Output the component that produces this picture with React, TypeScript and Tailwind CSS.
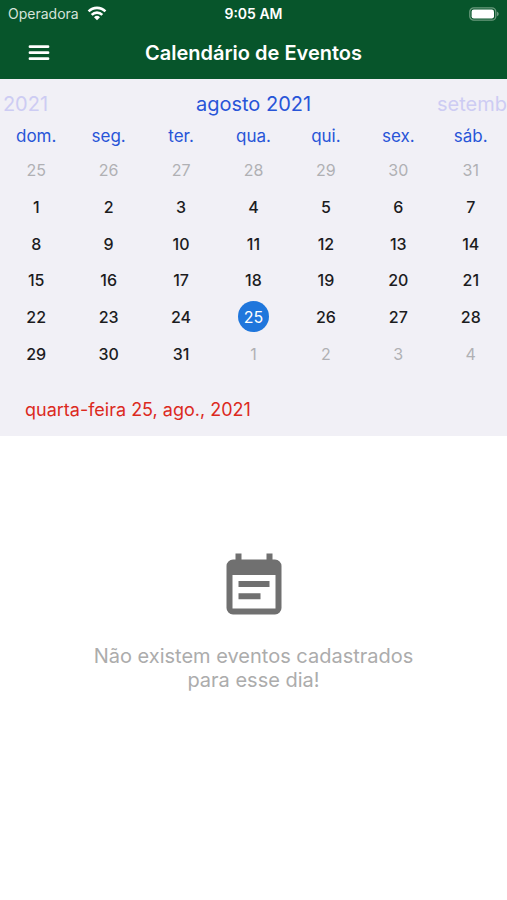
import React, { useState } from 'react';

// Datos del calendario
const WEEK_DAYS = ['dom.', 'seg.', 'ter.', 'qua.', 'qui.', 'sex.', 'sáb.'];
const MONTHS = ['julho 2021', 'agosto 2021', 'setembro 2021'];
const FIRST_DAY = new Date(2021, 6, 25);
const CURRENT_MONTH = 7;

const buildWeeks = (): Date[][] =>
  Array.from({ length: 6 }, (_, week) =>
    Array.from(
      { length: 7 },
      (_, day) =>
        new Date(FIRST_DAY.getFullYear(), FIRST_DAY.getMonth(), FIRST_DAY.getDate() + week * 7 + day)
    )
  );

const LONG_DAYS = ['domingo', 'segunda-feira', 'terça-feira', 'quarta-feira', 'quinta-feira', 'sexta-feira', 'sábado'];
const SHORT_MONTHS = ['jan.', 'fev.', 'mar.', 'abr.', 'mai.', 'jun.', 'jul.', 'ago.', 'set.', 'out.', 'nov.', 'dez.'];

const formatDate = (d: Date) =>
  `${LONG_DAYS[d.getDay()]} ${d.getDate()}, ${SHORT_MONTHS[d.getMonth()]}, ${d.getFullYear()}`;

const WifiIcon: React.FC = () => (
  <svg viewBox="0 0 20 15" className="w-5 h-[15px]" fill="none" stroke="white" strokeWidth="2.6" aria-hidden="true">
    <path d="M1.6 5.4a11.8 11.8 0 0 1 16.8 0" />
    <path d="M4.7 8.800a7.5 7.5 0 0 1 10.6 0" />
    <path d="M10 14.2 7 11.2a4.3 4.3 0 0 1 6 0z" fill="white" stroke="none" />
  </svg>
);

const BatteryIcon: React.FC = () => (
  <svg viewBox="0 0 30 14" className="w-[30px] h-3.5" aria-hidden="true">
    <rect x="0.8" y="0.8" width="26" height="12.4" rx="4" fill="none" stroke="#6b9a7e" strokeWidth="1.3" />
    <rect x="2.6" y="2.6" width="22.4" height="8.8" rx="2.2" fill="white" />
    <path d="M28 4.8c1.2.4 1.7 1.2 1.7 2.2s-.5 1.8-1.7 2.2z" fill="#6b9a7e" />
  </svg>
);

const EventNoteIcon: React.FC = () => (
  <svg viewBox="0 0 56 62" className="w-14 h-[62px]" fill="#707070" aria-hidden="true">
    <path
      fillRule="evenodd"
      d="M9.5.5h6v6h25v-6h6v6H49a6.5 6.5 0 0 1 6.5 6.5v42a6.5 6.5 0 0 1-6.5 6.5H7A6.5 6.5 0 0 1 .5 55V13A6.5 6.5 0 0 1 7 6.5h2.5zM6.5 22v33.5h43V22z"
    />
    <path d="M12.5 28h31v6h-31zM12.5 40.300h22v6h-22z" />
  </svg>
);

const App: React.FC = () => {
  const [selected, setSelected] = useState<Date>(new Date(2021, 7, 25));

  return (
    <div className="min-h-screen bg-white font-[Inter,sans-serif]">
      <header className="bg-[#07552b] text-white">
        {/* Barra de estado */}
        <div className="grid grid-cols-3 items-center h-[27px] px-2 text-[14px]">
          <div className="flex items-center gap-2 text-[#d5e3da]">
            <span>Operadora</span>
            <WifiIcon />
          </div>
          <span className="text-center font-semibold">9:05 AM</span>
          <div className="flex justify-end">
            <BatteryIcon />
          </div>
        </div>

        <div className="grid grid-cols-[50px_1fr_50px] items-center h-[52px] px-[14px]">
          <button type="button" aria-label="Menu" className="flex items-center justify-center h-12">
            <svg viewBox="0 0 22 16" className="w-[22px] h-4" stroke="white" strokeWidth="2.8" strokeLinecap="round" aria-hidden="true">
              <path d="M2 1.700h18M2 7.700h18M2 13.700h18" />
            </svg>
          </button>
          <h1 className="text-center text-[20px] font-semibold">Calendário de Eventos</h1>
        </div>
      </header>

      <section className="bg-[#f1f0f6]">
        {/* Cabecera con los meses */}
        <div className="flex justify-center overflow-hidden h-[43px] pt-[9px]">
          {MONTHS.map((month) => (
            <div
              key={month}
              className={`w-1/2 shrink-0 text-center whitespace-nowrap text-[20px] leading-8 ${
                month === 'agosto 2021' ? 'text-[#2855d8]' : 'text-[#cdccf3]'
              }`}
            >
              {month}
            </div>
          ))}
        </div>

        <table className="w-full h-[250px] table-fixed text-center text-[16px]">
          <thead>
            <tr className="h-[30px]">
              {WEEK_DAYS.map((day) => (
                <th key={day} scope="col" className="p-0 text-[17px] font-normal text-[#2855d8]">
                  {day}
                </th>
              ))}
            </tr>
          </thead>
          <tbody>
            {buildWeeks().map((week) => (
              <tr key={week[0].getTime()}>
                {week.map((date) => {
                  const isSelected = date.getTime() === selected.getTime();
                  const isOutside = date.getMonth() !== CURRENT_MONTH;
                  return (
                    <td key={date.getTime()} className="p-0">
                      <button
                        type="button"
                        onClick={() => setSelected(date)}
                        className={`block mx-auto size-[31px] rounded-full ${
                          isSelected
                            ? 'bg-[#1f76dc] text-white'
                            : isOutside
                              ? 'text-[#b0b0b4]'
                              : 'text-[#1c1c1e] font-medium'
                        }`}
                      >
                        {date.getDate()}
                      </button>
                    </td>
                  );
                })}
              </tr>
            ))}
          </tbody>
        </table>

        <p className="px-[25px] pt-6 pb-3 text-[18px] leading-7 text-[#dc2a1e]">{formatDate(selected)}</p>
      </section>

      <main className="flex flex-col items-center pt-[117px] px-20">
        <EventNoteIcon />
        <p className="mt-[29px] text-center text-[20px] leading-6 text-[#acacac]">
          Não existem eventos cadastrados para esse dia!
        </p>
      </main>
    </div>
  );
};

export default App;
